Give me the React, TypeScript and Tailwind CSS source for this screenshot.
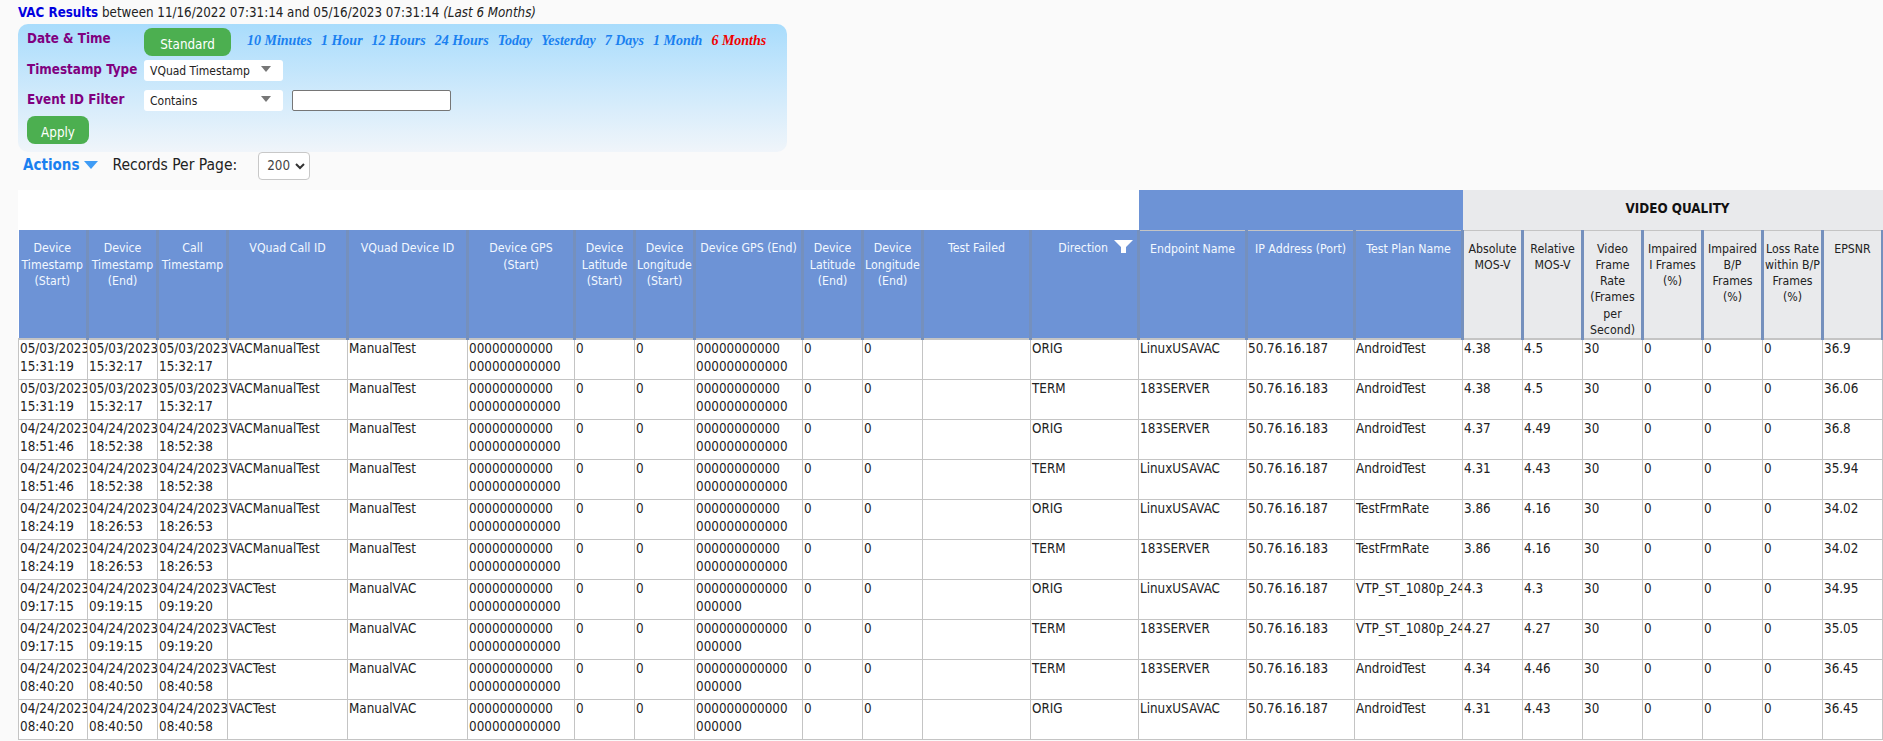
const columns = [
  { label: "Device Timestamp (Start)", width: "w-[69px]" },
  { label: "Device Timestamp (End)", width: "w-[70px]" },
  { label: "Call Timestamp", width: "w-[70px]" },
  { label: "VQuad Call ID", width: "w-[120px]" },
  { label: "VQuad Device ID", width: "w-[120px]" },
  { label: "Device GPS\n(Start)", width: "w-[107px]" },
  { label: "Device Latitude (Start)", width: "w-[60px]" },
  { label: "Device Longitude (Start)", width: "w-[60px]" },
  { label: "Device GPS (End)", width: "w-[108px]" },
  { label: "Device Latitude (End)", width: "w-[60px]" },
  { label: "Device Longitude (End)", width: "w-[60px]" },
  { label: "Test Failed", width: "w-[108px]" },
  { label: "Direction", width: "w-[108px]" },
  { label: "Endpoint Name", width: "w-[108px]" },
  { label: "IP Address (Port)", width: "w-[108px]" },
  { label: "Test Plan Name", width: "w-[108px]" },
];

const videoColumns = [
  "Absolute MOS-V",
  "Relative MOS-V",
  "Video Frame Rate (Frames per Second)",
  "Impaired I\u00a0Frames (%)",
  "Impaired B/P Frames (%)",
  "Loss Rate within B/P Frames (%)",
  "EPSNR",
];

const gps = "00000000000 000000000000";
const gpsShort = "000000000000 000000";

const rows = [
  ["05/03/2023 15:31:19", "05/03/2023 15:32:17", "05/03/2023 15:32:17", "VACManualTest", "ManualTest", gps, "ORIG", "LinuxUSAVAC", "50.76.16.187", "AndroidTest", "4.38", "4.5", "36.9"],
  ["05/03/2023 15:31:19", "05/03/2023 15:32:17", "05/03/2023 15:32:17", "VACManualTest", "ManualTest", gps, "TERM", "183SERVER", "50.76.16.183", "AndroidTest", "4.38", "4.5", "36.06"],
  ["04/24/2023 18:51:46", "04/24/2023 18:52:38", "04/24/2023 18:52:38", "VACManualTest", "ManualTest", gps, "ORIG", "183SERVER", "50.76.16.183", "AndroidTest", "4.37", "4.49", "36.8"],
  ["04/24/2023 18:51:46", "04/24/2023 18:52:38", "04/24/2023 18:52:38", "VACManualTest", "ManualTest", gps, "TERM", "LinuxUSAVAC", "50.76.16.187", "AndroidTest", "4.31", "4.43", "35.94"],
  ["04/24/2023 18:24:19", "04/24/2023 18:26:53", "04/24/2023 18:26:53", "VACManualTest", "ManualTest", gps, "ORIG", "LinuxUSAVAC", "50.76.16.187", "TestFrmRate", "3.86", "4.16", "34.02"],
  ["04/24/2023 18:24:19", "04/24/2023 18:26:53", "04/24/2023 18:26:53", "VACManualTest", "ManualTest", gps, "TERM", "183SERVER", "50.76.16.183", "TestFrmRate", "3.86", "4.16", "34.02"],
  ["04/24/2023 09:17:15", "04/24/2023 09:19:15", "04/24/2023 09:19:20", "VACTest", "ManualVAC", gpsShort, "ORIG", "LinuxUSAVAC", "50.76.16.187", "VTP_ST_1080p_24", "4.3", "4.3", "34.95"],
  ["04/24/2023 09:17:15", "04/24/2023 09:19:15", "04/24/2023 09:19:20", "VACTest", "ManualVAC", gpsShort, "TERM", "183SERVER", "50.76.16.183", "VTP_ST_1080p_24", "4.27", "4.27", "35.05"],
  ["04/24/2023 08:40:20", "04/24/2023 08:40:50", "04/24/2023 08:40:58", "VACTest", "ManualVAC", gpsShort, "TERM", "183SERVER", "50.76.16.183", "AndroidTest", "4.34", "4.46", "36.45"],
  ["04/24/2023 08:40:20", "04/24/2023 08:40:50", "04/24/2023 08:40:58", "VACTest", "ManualVAC", gpsShort, "ORIG", "LinuxUSAVAC", "50.76.16.187", "AndroidTest", "4.31", "4.43", "36.45"],
];

const quickRanges = ["10 Minutes", "1 Hour", "12 Hours", "24 Hours", "Today", "Yesterday", "7 Days", "1 Month"];

function Cell({ children }: { children?: React.ReactNode }) {
  return (
    <td className="h-10 overflow-hidden border border-[#c4c4c4] pl-px align-top leading-[18px] text-[#222]">
      {children}
    </td>
  );
}

function FakeSelect({ label }: { label: string }) {
  return (
    <div className="flex h-[21px] w-[139px] items-center justify-between rounded-[3px] bg-white pr-3 pl-[6px] text-[12px] text-[#222]">
      <span>{label}</span>
      <span className="mb-1 h-0 w-0 border-x-[5px] border-t-[6px] border-x-transparent border-t-[#777]" />
    </div>
  );
}

export default function App() {
  return (
    <div className="h-screen overflow-hidden bg-[#fafafa] font-['DejaVu_Sans_Condensed','DejaVu_Sans',sans-serif] text-[13.33px]">
      <div className="pt-[5px] pl-[18px] text-[13.25px] leading-[16px] text-[#222]">
        <span className="font-bold text-[#0000e0]">VAC Results</span> between 11/16/2022 07:31:14 and 05/16/2023 07:31:14{" "}
        <i>(Last 6 Months)</i>
      </div>

      <div className="mt-[3px] ml-[18px] h-[128px] w-[769px] rounded-[10px] bg-gradient-to-b from-[#a8dcfc] to-[#f0f5fa] pt-1 pl-[9px]">
        <div className="flex h-[28px]">
          <div className="w-[117px] pt-px font-bold text-[#800080]">Date &amp; Time</div>
          <button className="h-[28px] w-[87px] rounded-lg bg-[#4caf50] pt-[6px] text-white">Standard</button>
          <div className="ml-4 flex gap-[9px] pt-[2px] font-['Liberation_Serif',serif] text-[14px] font-bold text-[#1a80f0] italic">
            {quickRanges.map((r) => (
              <span key={r}>{r}</span>
            ))}
            <span className="text-[#f00000]">6 Months</span>
          </div>
        </div>
        <div className="mt-1 flex h-[21px] items-center">
          <div className="w-[117px] pb-[2px] font-bold text-[#800080]">Timestamp Type</div>
          <FakeSelect label="VQuad Timestamp" />
        </div>
        <div className="mt-[9px] flex h-[21px] items-center">
          <div className="w-[117px] pb-[2px] font-bold text-[#800080]">Event ID Filter</div>
          <FakeSelect label="Contains" />
          <input className="ml-[9px] h-[21px] w-[159px] rounded-[2px] border border-[#767676] bg-white" />
        </div>
        <button className="mt-[5px] h-[28px] w-[62px] rounded-lg bg-[#4caf50] pt-[6px] text-white">Apply</button>
      </div>

      <div className="flex h-[38px] items-start pl-[23px]">
        <span className="pt-px text-[15px] leading-[24px] font-bold text-[#1a80f0]">Actions</span>
        <span className="mt-[9px] ml-[5px] h-0 w-0 border-x-[7px] border-t-[8px] border-x-transparent border-t-[#3f9cf5]" />
        <span className="ml-[14px] pt-px text-[15.5px] leading-[24px] text-[#222]">Records Per Page:</span>
        <div className="ml-[21px] flex h-[28px] w-[52px] items-center justify-between rounded-[4px] border border-[#c8c8c8] bg-white pr-1 pl-2 text-[#444]">
          200
          <svg width="10" height="7" viewBox="0 0 10 7" fill="none" stroke="#333" strokeWidth="2">
            <path d="M1 1l4 4 4-4" />
          </svg>
        </div>
      </div>

      <table className="ml-[18px] w-[1874px] table-fixed border-collapse bg-white">
        <colgroup>
          {columns.map((c) => (
            <col key={c.label} className={c.width} />
          ))}
          {videoColumns.map((c) => (
            <col key={c} className="w-[60px]" />
          ))}
          <col className="w-[10px]" />
        </colgroup>
        <thead>
          <tr className="h-10">
            <th colSpan={13} className="bg-white" />
            <th colSpan={3} className="border-b border-[#c4c4c4] bg-[#6d93d6]" />
            <th colSpan={8} className="border-b border-[#c4c4c4] bg-[#e9eaec] pb-px text-center font-bold text-[#111]">
              VIDEO QUALITY
            </th>
          </tr>
          <tr className="h-[109px] border-b-2 border-[#c4c4c4]">
            {columns.map((c) => (
              <th
                key={c.label}
                className="border-r-[3px] border-[#7590bd] bg-[#6d93d6] px-px pt-[10px] align-top text-[12.25px] leading-[16.5px] font-normal whitespace-pre-line text-[#f2f8ff]"
              >
                {c.label === "Direction" ? (
                  <span className="flex items-start justify-end pr-[3px]">
                    Direction
                    <svg className="ml-[6px]" width="19" height="13" viewBox="0 0 19 13" fill="#fff">
                      <path d="M0 0h19l-7 7v6H7V7z" />
                    </svg>
                  </span>
                ) : (
                  c.label
                )}
              </th>
            ))}
            {videoColumns.map((c) => (
              <th
                key={c}
                className="border-r-[3px] border-[#7590bd] bg-[#e9eaec] px-px pt-[10px] align-top text-[12.25px] leading-[16.25px] font-normal text-[#222]"
              >
                {c}
              </th>
            ))}
            <th className="bg-[#e9eaec]" />
          </tr>
        </thead>
        <tbody>
          {rows.map((r, i) => (
            <tr key={i}>
              <Cell>{r[0]}</Cell>
              <Cell>{r[1]}</Cell>
              <Cell>{r[2]}</Cell>
              <Cell>{r[3]}</Cell>
              <Cell>{r[4]}</Cell>
              <Cell>{gps}</Cell>
              <Cell>0</Cell>
              <Cell>0</Cell>
              <Cell>{r[5]}</Cell>
              <Cell>0</Cell>
              <Cell>0</Cell>
              <Cell />
              <Cell>{r[6]}</Cell>
              <Cell>{r[7]}</Cell>
              <Cell>{r[8]}</Cell>
              <Cell>{r[9]}</Cell>
              <Cell>{r[10]}</Cell>
              <Cell>{r[11]}</Cell>
              <Cell>30</Cell>
              <Cell>0</Cell>
              <Cell>0</Cell>
              <Cell>0</Cell>
              <Cell>{r[12]}</Cell>
              <Cell />
            </tr>
          ))}
        </tbody>
      </table>
    </div>
  );
}
